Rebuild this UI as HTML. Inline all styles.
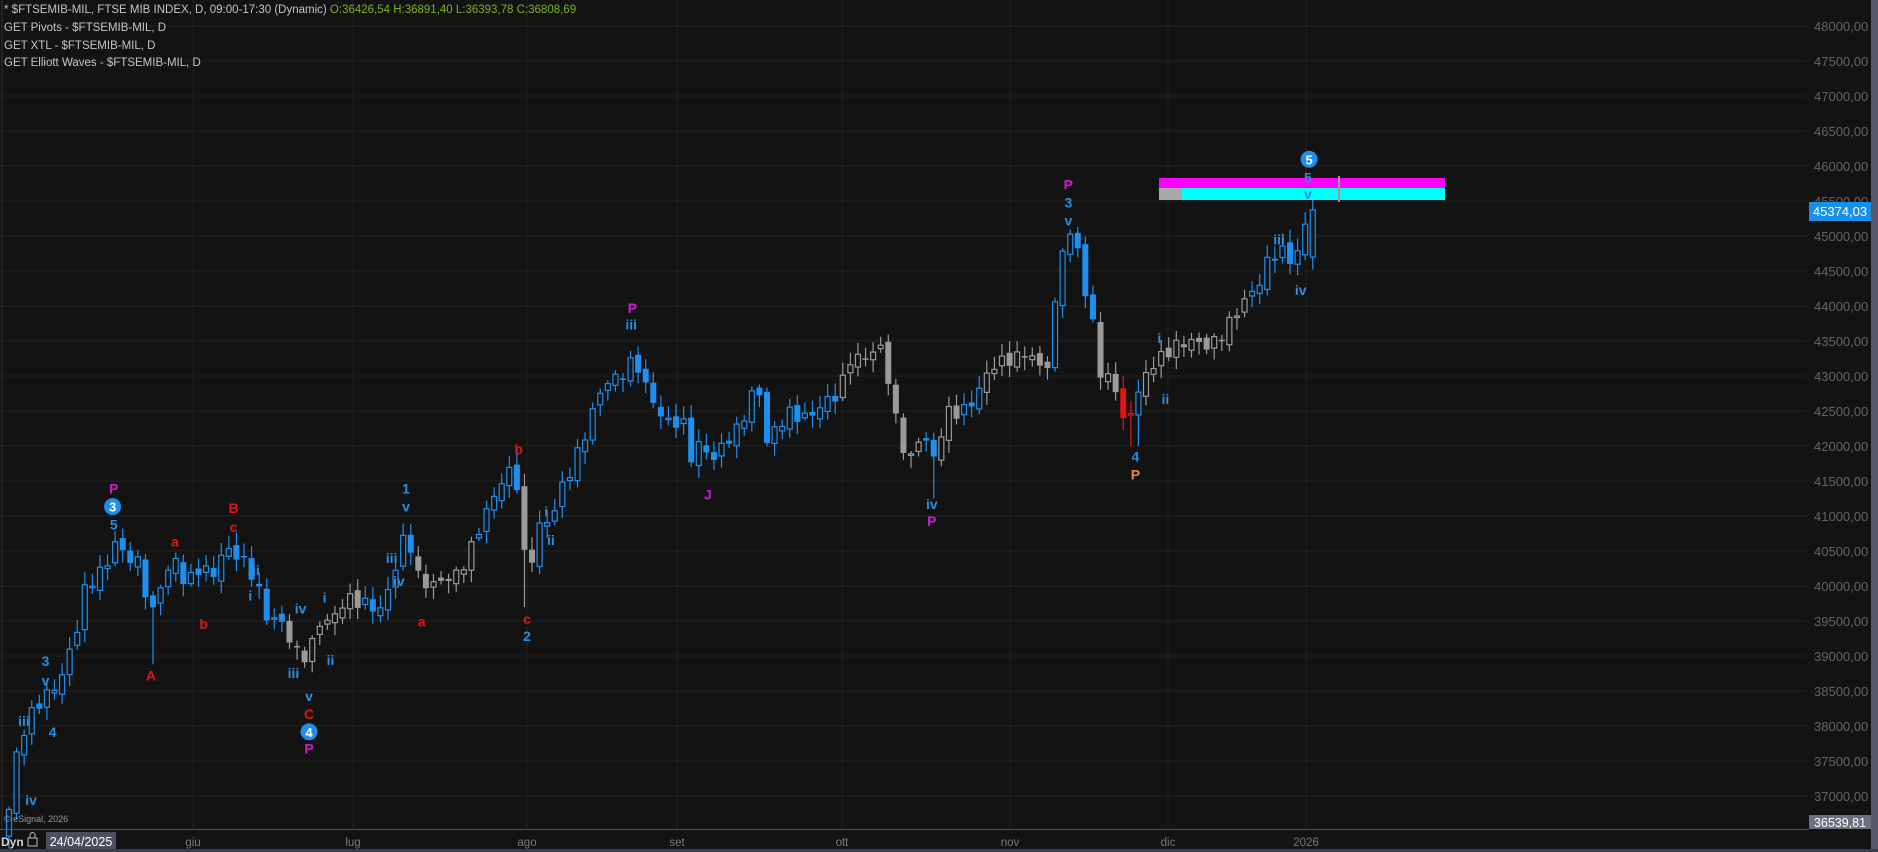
<!DOCTYPE html>
<html><head><meta charset="utf-8"><style>
html,body{margin:0;padding:0;background:#131313;width:1878px;height:852px;overflow:hidden;font-family:"Liberation Sans",sans-serif}
.hdr{position:absolute;left:4px;color:#c4c4c4;font-size:11.5px;white-space:nowrap}
</style></head><body>
<svg id="s" width="1878" height="852" style="position:absolute;left:0;top:0" xmlns="http://www.w3.org/2000/svg"></svg>
<div class="hdr" style="top:4px">* $FTSEMIB-MIL, FTSE MIB INDEX, D, 09:00-17:30 (Dynamic) <span style="color:#7cb518">O:36426,54 H:36891,40 L:36393,78 C:36808,69</span></div>
<div class="hdr" style="top:22px">GET Pivots - $FTSEMIB-MIL, D</div>
<div class="hdr" style="top:40px">GET XTL - $FTSEMIB-MIL, D</div>
<div class="hdr" style="top:57px">GET Elliott Waves - $FTSEMIB-MIL, D</div>
<script>
var S=document.getElementById('s'),h='';
function Y(p){return 26+(48000-p)*0.07;}
function P(dy){return 48000-(dy-22)*17.1;}
h+='<rect x="0" y="0" width="1878" height="852" fill="#131313"/>';
for(var p=37000;p<=48000;p+=500){var y=Y(p);h+='<line x1="0" x2="1806" y1="'+y+'" y2="'+y+'" stroke="#222" stroke-width="1"/>';
h+='<text x="1814" y="'+(y+5)+'" fill="#646464" font-size="13" font-family="Liberation Sans">'+p+',00</text>';}
var mx=[[193,'giu'],[353,'lug'],[527,'ago'],[677,'set'],[842,'ott'],[1010,'nov'],[1168,'dic'],[1306,'2026']];
mx.forEach(function(m){h+='<line x1="'+m[0]+'" x2="'+m[0]+'" y1="0" y2="829" stroke="#222"/>';
h+='<text x="'+m[0]+'" y="846" fill="#7a7a7a" font-size="11.5" text-anchor="middle" font-family="Liberation Sans">'+m[1]+'</text>';});
h+='<line x1="2" x2="2" y1="0" y2="829" stroke="#333"/>';
var K=[[7,660],[14,630],[22,605],[30,590],[40,580],[50,570],[57,548],[64,527],[72,488],[80,483],[90,470],[95,452],[105,465],[115,470],[127,515],[135,485],[147,468],[155,490],[165,475],[178,480],[188,458],[195,462],[208,475],[215,490],[222,515],[235,520],[247,545],[258,550],[265,520],[275,520],[290,500],[305,505],[318,510],[328,482],[340,440],[347,480],[358,490],[370,485],[383,480],[395,455],[405,430],[420,400],[430,390],[440,485],[450,440],[460,435],[468,410],[478,390],[488,365],[498,335],[505,320],[518,315],[530,300],[540,325],[550,345],[560,355],[570,350],[575,385],[585,370],[595,385],[605,370],[615,360],[625,340],[632,315],[640,370],[650,355],[660,345],[670,350],[680,345],[690,335],[700,330],[710,300],[720,300],[735,290],[745,330],[750,365],[760,385],[770,360],[780,385],[790,345],[800,345],[810,340],[820,320],[830,305],[845,300],[860,295],[873,315],[880,265],[887,205],[893,200],[900,205],[905,245],[912,265],[920,320],[930,315],[938,355],[948,335],[958,310],[968,300],[980,290],[995,285],[1010,290],[1020,280],[1030,265],[1040,250],[1050,240],[1060,215],[1070,210],[1080,220],[1086,205],[1092,178]];
var K2=K.map(function(k){return [k[0]*1.1977,P(k[1])];});
function interp(x){for(var i=0;i<K2.length-1;i++){if(x<=K2[i+1][0]){var t=(x-K2[i][0])/(K2[i+1][0]-K2[i][0]);return K2[i][1]+t*(K2[i+1][1]-K2[i][1]);}}return K2[K2.length-1][1];}
function col(d){
 if(d>=936&&d<=950)return '#e01515';
 var g=[[240,300],[345,395],[437,445],[700,770],[785,800],[820,875],[913,935],[953,1045]];
 for(var i=0;i<g.length;i++)if(d>=g[i][0]&&d<=g[i][1])return '#9a9a9a';
 return '#1e8fef';}
var prev=36426;
for(var i=0;i<=172;i++){
 var x=9+i*7.58;if(x>1314)break;
 var last=(x+7.58>1314);
 var c=interp(x)+Math.sin(i*2.7)*90;
 var o=prev+Math.sin(i*5.1)*60;
 if(i==0){o=36426;c=36808;}
 if(last){o=44700;c=45374;}
 var hi=Math.max(o,c)+40+Math.abs(Math.sin(i*3.3))*140,lo=Math.min(o,c)-40-Math.abs(Math.cos(i*1.9))*140;
 var d=x/1.1977;
 if(Math.abs(d-127)<3)lo=38880;
 if(Math.abs(d-440)<3)lo=39700;
 if(Math.abs(d-948)<4)lo=42000;
 if(Math.abs(d-780)<3)lo=41250;
 var C=col(d),yt=Y(Math.max(o,c)),yb=Y(Math.min(o,c));if(yb-yt<1.5)yb=yt+1.5;
 h+='<line x1="'+x+'" x2="'+x+'" y1="'+Y(hi)+'" y2="'+Y(lo)+'" stroke="'+C+'" stroke-width="1.2"/>';
 if(c>=o)h+='<rect x="'+(x-2.5)+'" y="'+yt+'" width="5" height="'+(yb-yt)+'" fill="#131313" stroke="'+C+'" stroke-width="1.2"/>';
 else h+='<rect x="'+(x-3)+'" y="'+yt+'" width="6" height="'+(yb-yt)+'" fill="'+C+'"/>';
 prev=c;}
h+='<rect x="1159" y="178" width="286" height="10" fill="#ff00ff"/><rect x="1159" y="188" width="286" height="12" fill="#00ffff"/><rect x="1159" y="188" width="23" height="12" fill="#a8a8a8"/>';
h+='<rect x="1338" y="176" width="2" height="26" fill="#9a9a9a"/>';
var B='#2a8ee0',M='#d417d4',R='#e01515',O='#f08050';
var L=[[95,408,'P',M],[94,423,'3',B,1],[95,438,'5',B],[38,552,'3',B],[38,568,'v',B],[20,602,'iii',B],[44,611,'4',B],[26,668,'iv',B],
[126,564,'A',R],[146,452,'a',R],[170,521,'b',R],[195,424,'B',R],[195,440,'c',R],[212,476,'iii',B],[209,497,'i',B],
[251,508,'iv',B],[245,562,'iii',B],[258,581,'v',B],[258,596,'C',R],[258,611,'4',B,1],[258,625,'P',M],[271,499,'i',B],[276,551,'ii',B],
[339,408,'1',B],[339,423,'v',B],[327,466,'iii',B],[333,485,'iv',B],[352,519,'a',R],[433,375,'b',R],[440,517,'c',R],[440,531,'2',B],[456,427,'i',B],[460,451,'ii',B],
[528,257,'P',M],[527,271,'iii',B],[591,413,'J',M],[778,421,'iv',B],[778,435,'P',M],[892,154,'P',M],[892,169,'3',B],[892,184,'v',B],
[948,381,'4',B],[948,396,'P',O],[968,282,'i',B],[973,333,'ii',B],[1068,200,'iii',B],[1086,242,'iv',B],[1093,133,'5',B,1],[1092,148,'5',B],[1092,162,'v',B]];
L.forEach(function(l){var x=l[0]*1.1977,y=l[1]*1.1977;
 if(l[4]){h+='<circle cx="'+x+'" cy="'+y+'" r="8.5" fill="#1e8fef"/><text x="'+x+'" y="'+(y+5)+'" fill="#fff" font-size="13" font-weight="bold" text-anchor="middle" font-family="Liberation Sans">'+l[2]+'</text>';}
 else h+='<text x="'+x+'" y="'+(y+5)+'" fill="'+l[3]+'" font-size="14" font-weight="bold" text-anchor="middle" font-family="Liberation Sans">'+l[2]+'</text>';});
h+='<rect x="1809" y="202" width="62" height="19" fill="#1a8fe8"/><text x="1840" y="216" fill="#fff" font-size="13" text-anchor="middle" font-family="Liberation Sans">45374,03</text>';
h+='<rect x="1809" y="815" width="62" height="14" fill="#6b7180"/><text x="1840" y="827" fill="#fff" font-size="12.5" text-anchor="middle" font-family="Liberation Sans">36539,81</text>';
h+='<rect x="1871" y="0" width="7" height="852" fill="#55596a"/>';
h+='<line x1="0" x2="1809" y1="829.5" y2="829.5" stroke="#555"/>';
h+='<rect x="0" y="849" width="1878" height="3" fill="#3a3d48"/>';
h+='<text x="4" y="822" fill="#9a9a9a" font-size="9" font-family="Liberation Sans">© eSignal, 2026</text>';
h+='<text x="1" y="846" fill="#d0d0d0" font-size="12" font-weight="bold" font-family="Liberation Sans">Dyn</text>';
h+='<rect x="28" y="838" width="9" height="8" fill="none" stroke="#bbb"/><path d="M30 838v-3a2.5 2.5 0 0 1 5 0v3" fill="none" stroke="#bbb"/>';
h+='<rect x="46" y="832" width="70" height="17" fill="#4a4f5c"/><text x="81" y="846" fill="#fff" font-size="12.5" text-anchor="middle" font-family="Liberation Sans">24/04/2025</text>';
S.innerHTML=h;
</script>
</body></html>
